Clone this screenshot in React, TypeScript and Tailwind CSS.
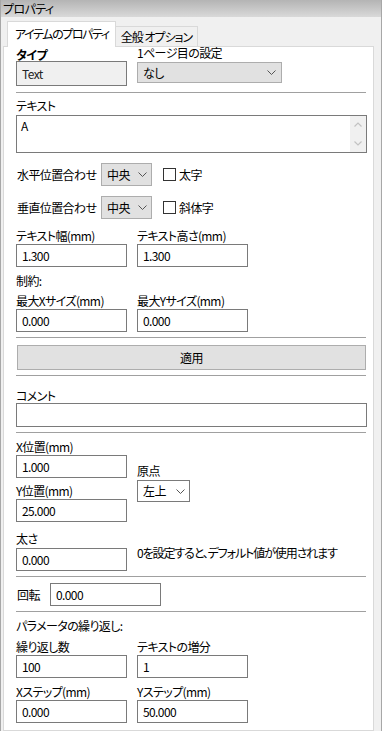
import type { ReactNode } from "react";

const font = "font-['Noto_Sans_CJK_JP','Noto_Sans',sans-serif] [font-feature-settings:'palt'] tracking-[-0.6px]";

const Chevron = ({ color = "#555" }: { color?: string }) => (
    <svg width="9" height="5" viewBox="0 0 9 5" className="shrink-0">
        <path d="M0.5 0.5 L4.5 4.5 L8.5 0.5" fill="none" stroke={color} strokeWidth="1" />
    </svg>
);

const Label = ({ children, className = "" }: { children: ReactNode; className?: string }) => (
    <div className={`text-[12px] leading-[16px] text-black whitespace-nowrap ${className}`}>{children}</div>
);

const TextBox = ({ value, className = "" }: { value: string; className?: string }) => (
    <div className={`h-[23px] border border-[#7a7a7a] bg-white pl-[5px] text-[12px] leading-[21px] text-black ${className}`}>
        {value}
    </div>
);

const Select = ({ value, className = "", white = false }: { value: string; className?: string; white?: boolean }) => (
    <div
        className={`flex items-center justify-between border pl-[5px] pr-[4px] text-[12px] text-black ${
            white ? "bg-white border-[#7a7a7a]" : "bg-[#e1e1e1] border-[#adadad]"
        } ${className}`}
    >
        <span>{value}</span>
        <Chevron />
    </div>
);

const Sep = ({ className = "" }: { className?: string }) => <div className={`h-px bg-[#a0a0a0] mr-px ${className}`} />;

const CheckBox = ({ label }: { label: string }) => (
    <div className="flex items-center ml-[11px]">
        <div className="w-[13px] h-[13px] border border-[#333] bg-white" />
        <span className="ml-[3px] text-[12px] leading-[16px]">{label}</span>
    </div>
);

const Pair = ({ left, right, lv, rv, className = "" }: { left: string; right: string; lv: string; rv: string; className?: string }) => (
    <div className={`flex ${className}`}>
        <div className="w-[111px]">
            <Label>{left}</Label>
            <TextBox value={lv} />
        </div>
        <div className="w-[111px] ml-[10px]">
            <Label>{right}</Label>
            <TextBox value={rv} />
        </div>
    </div>
);

export default function App() {
    return (
        <div className={`w-[382px] h-[731px] overflow-hidden bg-[#f0f0f0] border-x border-[#a7a7a7] flex flex-col ${font}`}>
            {/* title bar */}
            <div className="h-[17px] shrink-0 bg-gradient-to-b from-[#b4b4b4] to-[#d9d9d9] pl-[2px] text-[12px] leading-[17px] text-black">
                プロパティ
            </div>

            <div className="flex-1 flex flex-col pl-[2px] pr-[7px]">
                {/* tabs */}
                <div className="h-[29px] flex items-end pl-[4px]">
                    <div className="relative z-10 h-[26px] mb-[-1px] bg-white border-x border-t border-[#d9d9d9] pl-[7px] pr-[6px] text-[12px] leading-[24px] tracking-[-1.4px]">
                        アイテムのプロパティ
                    </div>
                    <div className="h-[20px] bg-[#f0f0f0] border-t border-r border-[#d9d9d9] px-[5px] text-[12px] leading-[20px] tracking-[-1px]">
                        全般 オプション
                    </div>
                </div>

                {/* panel */}
                <div className="flex-1 bg-white border border-[#d9d9d9] pl-[12px] pr-[6px]">
                    <div className="flex">
                        <div className="w-[111px]">
                            <div className="h-[14px] pt-[2px] text-[12px] leading-[12px] font-bold">タイプ</div>
                            <div className="h-[25px] border border-[#7a7a7a] bg-[#f0f0f0] pl-[5px] text-[12px] leading-[23px] text-[#222]">
                                Text
                            </div>
                        </div>
                        <div className="ml-[10px]">
                            <div className="h-[15px] text-[12px] leading-[12px]">1ページ目の設定</div>
                            <Select value="なし" className="w-[145px] h-[21px] pr-[5px]" />
                        </div>
                    </div>

                    <Sep className="mt-[6px]" />

                    <Label className="mt-[5px]">テキスト</Label>
                    <div className="mt-[1px] h-[38px] border border-[#7a7a7a] bg-white flex">
                        <div className="flex-1 pl-[4px] pt-[2px] text-[12px] leading-[16px]">A</div>
                        <div className="w-[16px] bg-[#f0f0f0] flex flex-col items-center justify-between py-[6px]">
                            <svg width="8" height="5" viewBox="0 0 8 5">
                                <path d="M0.5 4.5 L4 1 L7.5 4.5" fill="none" stroke="#c2c2c2" strokeWidth="1.2" />
                            </svg>
                            <svg width="8" height="5" viewBox="0 0 8 5">
                                <path d="M0.5 0.5 L4 4 L7.5 0.5" fill="none" stroke="#c2c2c2" strokeWidth="1.2" />
                            </svg>
                        </div>
                    </div>

                    <div className="mt-[10px] flex items-center">
                        <Label className="w-[85px] pl-px">水平位置合わせ</Label>
                        <Select value="中央" className="w-[51px] h-[23px]" />
                        <CheckBox label="太字" />
                    </div>
                    <div className="mt-[10px] flex items-center">
                        <Label className="w-[85px] pl-px">垂直位置合わせ</Label>
                        <Select value="中央" className="w-[51px] h-[23px]" />
                        <CheckBox label="斜体字" />
                    </div>

                    <Pair className="mt-[9px]" left="テキスト幅(mm)" right="テキスト高さ(mm)" lv="1.300" rv="1.300" />

                    <Label className="mt-[6px]">制約:</Label>
                    <Pair className="mt-[4px]" left="最大Xサイズ(mm)" right="最大Yサイズ(mm)" lv="0.000" rv="0.000" />

                    <Sep className="mt-[5px]" />

                    <div className="mt-[7px] mx-px h-[25px] bg-[#e1e1e1] border border-[#adadad] flex items-center justify-center text-[12px]">
                        適用
                    </div>

                    <Sep className="mt-[5px]" />

                    <div className="mt-[13px] text-[12px] leading-[14px]">コメント</div>
                    <div className="h-[24px] border border-[#7a7a7a] bg-white" />

                    <Sep className="mt-[5px]" />

                    <div className="flex mt-[6px]">
                        <div className="w-[111px]">
                            <Label>X位置(mm)</Label>
                            <TextBox value="1.000" />
                            <Label className="mt-[5px]">Y位置(mm)</Label>
                            <TextBox value="25.000" />
                        </div>
                        <div className="ml-[10px] pt-[24px]">
                            <Label>原点</Label>
                            <Select white value="左上" className="mt-px w-[53px] h-[22px]" />
                        </div>
                    </div>

                    <div className="flex mt-[9px]">
                        <div className="w-[111px]">
                            <Label>太さ</Label>
                            <TextBox value="0.000" className="mt-px" />
                        </div>
                        <div className="ml-[10px] pt-[14px]">
                            <Label className="tracking-[-1.1px]">0を設定すると、デフォルト値が使用されます</Label>
                        </div>
                    </div>

                    <Sep className="mt-[5px]" />

                    <div className="mt-[6px] flex items-center">
                        <Label className="w-[34px] pl-px">回転</Label>
                        <TextBox value="0.000" className="w-[111px]" />
                    </div>

                    <Sep className="mt-[5px]" />

                    <Label className="mt-[6px]">パラメータの繰り返し:</Label>
                    <Pair className="mt-[5px]" left="繰り返し数" right="テキストの増分" lv="100" rv="1" />
                    <Pair className="mt-[6px]" left="Xステップ(mm)" right="Yステップ(mm)" lv="0.000" rv="50.000" />
                </div>
            </div>
        </div>
    );
}
